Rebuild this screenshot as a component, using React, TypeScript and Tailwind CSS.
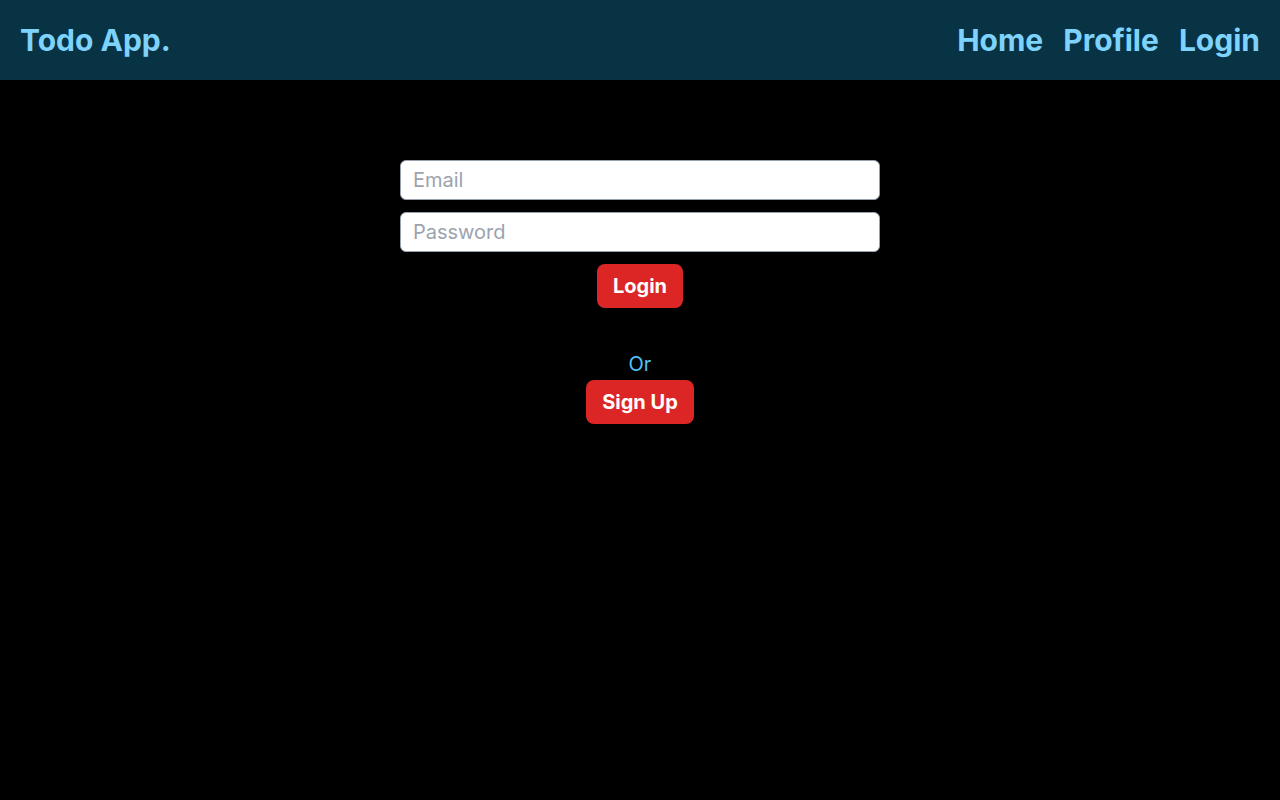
import React, { useState } from 'react';

const App: React.FC = () => {
  const [email, setEmail] = useState('');
  const [password, setPassword] = useState('');

  return (
    <div className="min-h-screen bg-black font-['Inter',sans-serif]">
      <header className="h-20 bg-[#083344] flex items-center justify-between px-5">
        <h1 className="text-3xl font-bold text-[#7dd3fc]">Todo App.</h1>
        <nav className="flex items-center gap-5">
          <a href="#" className="text-3xl font-bold text-[#7dd3fc]">Home</a>
          <a href="#" className="text-3xl font-bold text-[#7dd3fc]">Profile</a>
          <a href="#" className="text-3xl font-bold text-[#7dd3fc]">Login</a>
        </nav>
      </header>

      <main className="flex flex-col items-center pt-20">
        <form className="w-[480px] flex flex-col items-center gap-3" onSubmit={(e) => e.preventDefault()}>
          <input
            type="email"
            value={email}
            onChange={(e) => setEmail(e.target.value)}
            placeholder="Email"
            className="w-full h-10 px-3 text-xl bg-white border border-gray-400 rounded-md placeholder:text-[#9ca3af] text-gray-900"
          />
          <input
            type="password"
            value={password}
            onChange={(e) => setPassword(e.target.value)}
            placeholder="Password"
            className="w-full h-10 px-3 text-xl bg-white border border-gray-400 rounded-md placeholder:text-[#9ca3af] text-gray-900"
          />
          <button type="submit" className="bg-[#dc2626] text-white text-xl font-bold px-4 py-2 rounded-lg">
            Login
          </button>
        </form>
        <p className="mt-[42px] text-xl text-[#4fc3f7]">Or</p>
        <button className="mt-0.5 bg-[#dc2626] text-white text-xl font-bold px-4 py-2 rounded-lg">
          Sign Up
        </button>
      </main>
    </div>
  );
};

export default App;
